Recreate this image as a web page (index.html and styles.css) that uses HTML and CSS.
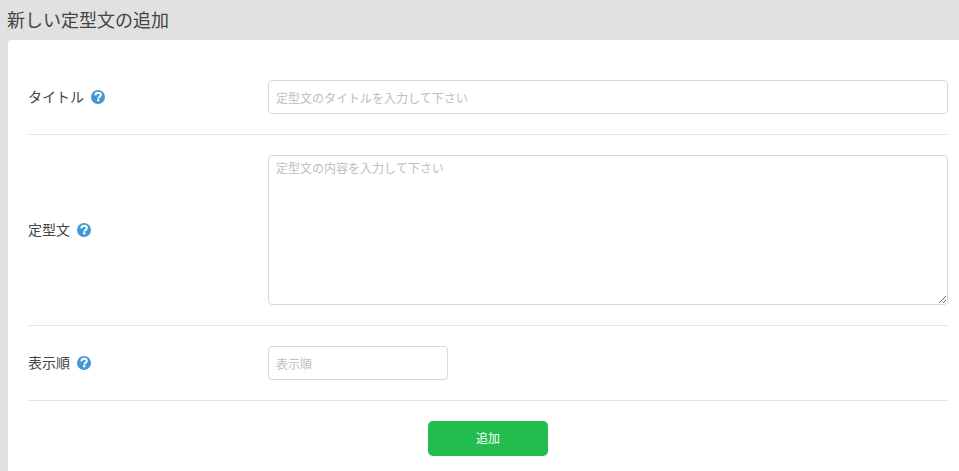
FILE: index.html
```html
<!DOCTYPE html>
<html lang="ja">
<head>
<meta charset="utf-8">
<title>新しい定型文の追加</title>
<link rel="stylesheet" href="styles.css">
</head>
<body>
<h1 class="page-title">新しい定型文の追加</h1>
<form class="card">
  <div class="row">
    <label class="label">タイトル
      <svg class="help" viewBox="0 0 14 14"><circle cx="7" cy="7" r="7" fill="#4097d6"/><path d="M4.3 5.3C4.5 3.7 5.6 2.8 7.1 2.8c1.6 0 2.7.9 2.7 2.3 0 2.1-2.5 1.8-2.5 3.3" fill="none" stroke="#fff" stroke-width="2"/><rect x="6.1" y="9.2" width="2.3" height="2.1" fill="#fff"/></svg>
    </label>
    <input class="field" type="text" placeholder="定型文のタイトルを入力して下さい">
  </div>
  <div class="row">
    <label class="label">定型文
      <svg class="help" viewBox="0 0 14 14"><circle cx="7" cy="7" r="7" fill="#4097d6"/><path d="M4.3 5.3C4.5 3.7 5.6 2.8 7.1 2.8c1.6 0 2.7.9 2.7 2.3 0 2.1-2.5 1.8-2.5 3.3" fill="none" stroke="#fff" stroke-width="2"/><rect x="6.1" y="9.2" width="2.3" height="2.1" fill="#fff"/></svg>
    </label>
    <textarea class="field area" placeholder="定型文の内容を入力して下さい"></textarea>
  </div>
  <div class="row">
    <label class="label">表示順
      <svg class="help" viewBox="0 0 14 14"><circle cx="7" cy="7" r="7" fill="#4097d6"/><path d="M4.3 5.3C4.5 3.7 5.6 2.8 7.1 2.8c1.6 0 2.7.9 2.7 2.3 0 2.1-2.5 1.8-2.5 3.3" fill="none" stroke="#fff" stroke-width="2"/><rect x="6.1" y="9.2" width="2.3" height="2.1" fill="#fff"/></svg>
    </label>
    <input class="field short" type="text" placeholder="表示順">
  </div>
  <div class="actions">
    <button class="submit" type="button">追加</button>
  </div>
</form>
</body>
</html>
```
FILE: styles.css
```css
* { box-sizing: border-box; }
html, body { height: 100%; }
body {
  margin: 0;
  background: #e1e1e1;
  color: #444;
  font-family: "Noto Sans CJK JP", "Liberation Sans", sans-serif;
  overflow: hidden;
}
.page-title {
  margin: 0;
  height: 40px;
  padding: 8px 0 0 7px;
  font-size: 18px;
  line-height: 22px;
  font-weight: 400;
}
.card {
  margin-left: 8px;
  padding: 20px 11px 0 20px;
  min-height: 431px;
  background: #fff;
  border-radius: 4px 0 0 0;
}
.row {
  display: flex;
  align-items: center;
  padding: 20px 0;
  border-bottom: 1px solid #e2e4e6;
}
.label {
  display: flex;
  align-items: center;
  gap: 7px;
  width: 240px;
  flex: none;
  padding-bottom: 2px;
  font-size: 14px;
  line-height: 20px;
}
.help { width: 14px; height: 14px; flex: none; margin-top: 2px; }
.field {
  display: block;
  width: 680px;
  height: 34px;
  padding: 0 7px;
  border: 1px solid #d5dade;
  border-radius: 4px;
  background: #fff;
  color: #333;
  font: 12px/16px "Noto Sans CJK JP", "Liberation Sans", sans-serif;
}
.field::placeholder { color: #b9c0c6; opacity: 1; }
.area {
  height: 150px;
  padding: 4px 7px;
  resize: vertical;
}
.short { width: 180px; }
.actions {
  display: flex;
  justify-content: center;
  padding-top: 20px;
}
.submit {
  width: 120px;
  height: 35px;
  padding: 0 0 2px;
  border: 0;
  border-radius: 5px;
  background: #22bd4e;
  color: #fff;
  font: 12px "Noto Sans CJK JP", "Liberation Sans", sans-serif;
}
```
